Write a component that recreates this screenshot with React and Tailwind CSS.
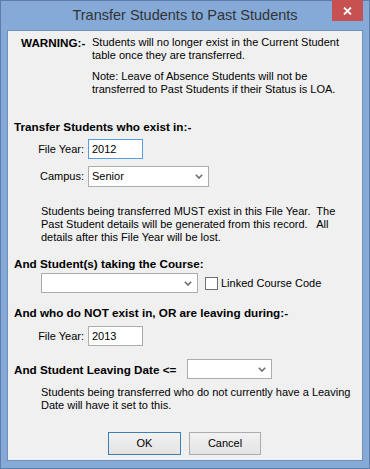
import React from "react";

const font = { fontFamily: '"Liberation Sans", Arial, sans-serif' };

const Chevron = () => (
    <svg width="8" height="5" viewBox="0 0 8 5" className="shrink-0">
        <polyline points="0.8,0.8 4,4 7.2,0.8" fill="none" stroke="#6d6d6d" strokeWidth="1.6" />
    </svg>
);

const Select = ({ value, className }) => (
    <div className={`flex items-center justify-between bg-white border border-[#acacac] pl-[3px] pr-[5px] ${className}`}>
        <span>{value}</span>
        <Chevron />
    </div>
);

const Field = ({ label, children }) => (
    <div className="flex items-center">
        <span className="w-[76px] text-right">{label}</span>
        <div className="ml-[4px]">{children}</div>
    </div>
);

const Heading = ({ children, className = "" }) => (
    <div className={`pl-[6px] font-bold text-[11.7px] leading-[13px] ${className}`}>{children}</div>
);

const App = () => {
    return (
        <div
            className="w-[370px] h-[469px] bg-[#85aad8] border border-[#5d7eab] px-[6px] pb-[7px] flex flex-col relative text-[11px] leading-[13px] text-black"
            style={font}
        >
            {/* Title bar */}
            <div className="h-[29px] text-center text-[14.5px] leading-[29px] text-[#333333]">
                Transfer Students to Past Students
            </div>
            <div className="absolute right-[6px] top-[-1px] w-[31px] h-[21px] bg-[#c75050] flex items-center justify-center">
                <svg width="9" height="8" viewBox="0 0 9 8">
                    <path d="M1 0.5 L8 7.5 M8 0.5 L1 7.5" stroke="white" strokeWidth="1.8" />
                </svg>
            </div>

            {/* Dialog body */}
            <div className="flex-1 bg-[#f0f0f0] border border-[#6f90bd] pt-[5px]">
                {/* Warning */}
                <div className="flex pl-[13px]">
                    <div className="w-[71px] font-bold text-[11.7px]">WARNING:-</div>
                    <div>
                        <div>Students will no longer exist in the Current Student</div>
                        <div>table once they are transferred.</div>
                        <div className="mt-[8px]">Note: Leave of Absence Students will not be</div>
                        <div>transferred to Past Students if their Status is LOA.</div>
                    </div>
                </div>

                <Heading className="mt-[24px]">Transfer Students who exist in:-</Heading>

                <div className="mt-[6px]">
                    <Field label="File Year:">
                        <div className="w-[55px] h-[20px] bg-white border border-[#569de5] pl-[3px] flex items-center">2012</div>
                    </Field>
                </div>
                <div className="mt-[7px]">
                    <Field label="Campus:">
                        <Select value="Senior" className="w-[121px] h-[21px]" />
                    </Field>
                </div>

                <div className="mt-[18px] pl-[33px] whitespace-pre">
                    <div>Students being transferred MUST exist in this File Year.  The</div>
                    <div>Past Student details will be generated from this record.   All</div>
                    <div>details after this File Year will be lost.</div>
                </div>

                <Heading className="mt-[13px]">And Student(s) taking the Course:</Heading>

                <div className="mt-[3px] pl-[33px] flex items-center">
                    <Select value="" className="w-[157px] h-[20px]" />
                    <div className="ml-[7px] w-[13px] h-[13px] bg-white border border-[#707070]" />
                    <span className="ml-[3px]">Linked Course Code</span>
                </div>

                <Heading className="mt-[13px]">And who do NOT exist in, OR are leaving during:-</Heading>

                <div className="mt-[7px]">
                    <Field label="File Year:">
                        <div className="w-[55px] h-[20px] bg-white border border-[#acacac] pl-[3px] flex items-center">2013</div>
                    </Field>
                </div>

                <div className="mt-[13px] flex items-center">
                    <Heading className="w-[179px]">And Student Leaving Date &lt;=</Heading>
                    <Select value="" className="w-[85px] h-[20px]" />
                </div>

                <div className="mt-[7px] pl-[33px]">
                    <div>Students being transferred who do not currently have a Leaving</div>
                    <div>Date will have it set to this.</div>
                </div>

                <div className="mt-[20px] pl-[100px] flex gap-[8px]">
                    <button className="w-[73px] h-[23px] border border-[#3c7fb1] bg-gradient-to-b from-[#f2f2f2] to-[#e3e3e3]">OK</button>
                    <button className="w-[72px] h-[23px] border border-[#acacac] bg-gradient-to-b from-[#f2f2f2] to-[#e3e3e3]">Cancel</button>
                </div>
            </div>
        </div>
    );
};

export default App;
